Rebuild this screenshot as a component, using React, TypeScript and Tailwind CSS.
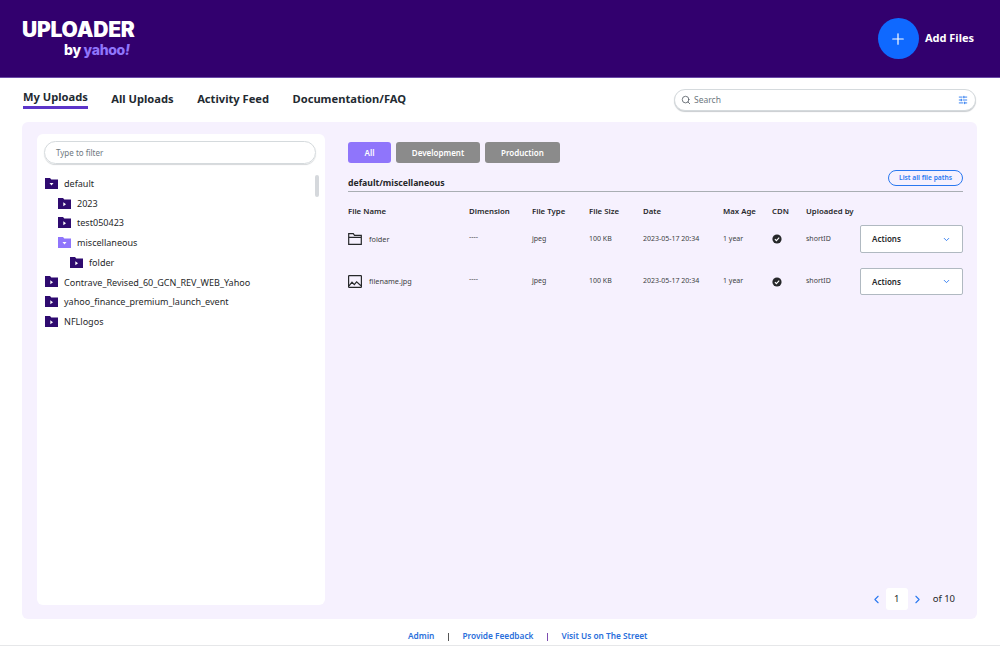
import { ChevronDown, ChevronLeft, ChevronRight, Plus, Search, SlidersHorizontal } from "lucide-react";

function TreeFolder({ light, open }: { light?: boolean; open?: boolean }) {
  return (
    <svg width="13" height="11" viewBox="0 0 13 11" className="-mt-[1px] shrink-0">
      <path d="M0 0h5l1.3 1.5H13V11H0z" fill={light ? "#8f75fb" : "#2f0b70"} />
      {open ? <path d="M4.5 5h4L6.5 7.5z" fill="#fff" /> : <path d="M5.3 4.2l2.7 2-2.7 2z" fill="#fff" />}
    </svg>
  );
}

function TreeRow({ label, indent, light, open }: { label: string; indent: string; light?: boolean; open?: boolean }) {
  return (
    <div className={`flex h-[19.7px] items-center gap-[6px] text-[9.05px] text-[#26282a] ${indent}`}>
      <TreeFolder light={light} open={open} />
      <span>{label}</span>
    </div>
  );
}

function FolderIcon() {
  return (
    <svg width="14" height="12" viewBox="0 0 14 12" fill="none" stroke="#26282a" strokeWidth="1.2">
      <path d="M.7.7h4.6l1.2 1.6h6.8v9H.7zM.7 4.4h12.6" />
    </svg>
  );
}

function ImageIcon() {
  return (
    <svg width="14" height="13" viewBox="0 0 14 13" fill="none" stroke="#26282a" strokeWidth="1.2">
      <rect x=".6" y=".6" width="12.8" height="11.8" rx=".6" />
      <path d="M1 10.8l3-3.6 2.3 2.4 2.3-2.8 4.4 4" />
    </svg>
  );
}

function CheckBadge() {
  return (
    <svg width="10" height="10" viewBox="0 0 10 10">
      <circle cx="5" cy="5" r="4.6" fill="#26282a" />
      <path d="M2.9 5.1l1.5 1.5 2.8-3" fill="none" stroke="#fff" strokeWidth="1.1" />
    </svg>
  );
}

function FileRow({ name, icon }: { name: string; icon: React.ReactNode }) {
  return (
    <div className="grid h-[42.4px] grid-cols-[121px_63px_57px_54px_80px_49px_34px_54px_103px] items-center text-[7px] text-[#3c3f43]">
      <div className="flex items-center gap-[7px] text-[7.3px]">
        {icon}
        <span>{name}</span>
      </div>
      <span className="-translate-y-[2px]">----</span>
      <span>jpeg</span>
      <span>100 KB</span>
      <span>2023-05-17 20:34</span>
      <span>1 year</span>
      <CheckBadge />
      <span>shortID</span>
      <div className="flex h-[27.5px] items-center justify-between rounded-[2px] border border-[#b0b9c1] bg-white px-[11px] text-[8px] font-semibold text-[#26282a]">
        Actions
        <ChevronDown size={9} strokeWidth={2.4} className="text-[#2a78f0]" />
      </div>
    </div>
  );
}

export default function App() {
  return (
    <div className="flex h-[646px] w-[1000px] flex-col overflow-hidden border-b border-[#e6e7e9] bg-white font-['Noto_Sans',sans-serif]">
      <header className="flex h-[78px] shrink-0 items-center justify-between border-b border-[#6a4aa8] bg-[#32006e] pl-[22px] pr-[26px]">
        <div className="-translate-y-[1px]">
          <div className="font-['Inter',sans-serif] text-[21px] font-black leading-[22px] tracking-[-0.2px] text-white">UPLOADER</div>
          <div className="mt-[1px] pl-[42px] font-['Inter',sans-serif] text-[14px] font-extrabold leading-[15px] tracking-[-0.3px] text-white">
            by <span className="text-[#8f75fb]">yahoo<em>!</em></span>
          </div>
        </div>
        <div className="flex items-center gap-[6px]">
          <div className="flex h-[41px] w-[41px] items-center justify-center rounded-full bg-[#0f69ff]">
            <Plus size={18} strokeWidth={1.6} className="text-white" />
          </div>
          <span className="text-[11px] font-bold text-white">Add Files</span>
        </div>
      </header>

      <nav className="flex h-[44px] shrink-0 items-center justify-between pl-[23px] pr-[24px]">
        <div className="flex -translate-y-[1px] items-center gap-[23.5px] text-[11.15px] font-bold text-[#232a31]">
          <span className="border-b-[3px] border-[#5c35c9] pb-[1px]">My Uploads</span>
          <span>All Uploads</span>
          <span>Activity Feed</span>
          <span>Documentation/FAQ</span>
        </div>
        <div className="flex h-[22px] w-[302px] items-center justify-between rounded-full border border-[#d5dadd] bg-white pl-[6px] pr-[7px] shadow-[0_1px_1px_#c9cdd0]">
          <div className="flex items-center gap-[3px] text-[8.5px] text-[#6e7780]">
            <Search size={10} strokeWidth={1.8} className="text-[#464e56]" />
            Search
          </div>
          <SlidersHorizontal size={10} strokeWidth={2.2} className="text-[#2a78f0]" />
        </div>
      </nav>

      <main className="mx-[22px] flex h-[497px] w-[955px] shrink-0 gap-[23px] rounded-[6px] bg-[#f6f1fe] pb-[14px] pl-[15px] pr-[14px] pt-[12px]">
        <aside className="relative h-full w-[288px] shrink-0 rounded-[6px] bg-white px-[7px] pt-[7px]">
          <div className="flex h-[23px] w-[272px] items-center rounded-full border border-[#d5dadd] pl-[11px] text-[8px] text-[#6e7780] shadow-[0_1px_1px_#d5d8da]">
            Type to filter
          </div>
          <div className="mt-[10px] flex flex-col pl-[1px]">
            <TreeRow label="default" indent="pl-0" open />
            <TreeRow label="2023" indent="pl-[13px]" />
            <TreeRow label="test050423" indent="pl-[13px]" />
            <TreeRow label="miscellaneous" indent="pl-[13px]" light open />
            <TreeRow label="folder" indent="pl-[25px]" />
            <TreeRow label="Contrave_Revised_60_GCN_REV_WEB_Yahoo" indent="pl-0" />
            <TreeRow label="yahoo_finance_premium_launch_event" indent="pl-0" />
            <TreeRow label="NFLlogos" indent="pl-0" />
          </div>
          <div className="absolute right-[6px] top-[41px] h-[22px] w-[4px] rounded-full bg-[#d5d8dc]" />
        </aside>

        <section className="-mb-[5px] flex min-w-0 flex-1 flex-col pt-[8px]">
          <div className="flex gap-[5px] text-[8px] font-semibold text-white">
            <div className="flex h-[21px] w-[43px] items-center justify-center rounded-[3px] bg-[#8f75fb]">All</div>
            <div className="flex h-[21px] w-[84px] items-center justify-center rounded-[3px] bg-[#8b8b8b]">Development</div>
            <div className="flex h-[21px] w-[75px] items-center justify-center rounded-[3px] bg-[#8b8b8b]">Production</div>
          </div>
          <div className="mt-[7px] flex h-[22px] items-end justify-between border-b border-[#a9aeb3] pb-[1px]">
            <span className="text-[8.7px] font-bold text-[#26282a]">default/miscellaneous</span>
            <div className="mb-[4px] flex h-[16px] w-[75px] items-center justify-center rounded-full border border-[#2a78f0] text-[6.7px] font-semibold text-[#2a78f0]">
              List all file paths
            </div>
          </div>
          <div className="mt-[13px] grid grid-cols-[121px_63px_57px_54px_80px_49px_34px_157px] text-[7.8px] font-semibold leading-[12px] text-[#26282a]">
            <span>File Name</span>
            <span>Dimension</span>
            <span>File Type</span>
            <span>File Size</span>
            <span>Date</span>
            <span>Max Age</span>
            <span>CDN</span>
            <span>Uploaded by</span>
          </div>
          <div className="mt-[1px] flex flex-col">
            <FileRow name="folder" icon={<FolderIcon />} />
            <FileRow name="filename.jpg" icon={<ImageIcon />} />
          </div>
          <div className="mt-auto flex items-center justify-end pr-[8px] text-[9.5px] text-[#26282a]">
            <ChevronLeft size={13} strokeWidth={2} className="text-[#2a78f0]" />
            <div className="mx-[3px] flex h-[22px] w-[22px] items-center justify-center rounded-[3px] bg-white">1</div>
            <ChevronRight size={13} strokeWidth={2} className="text-[#2a78f0]" />
            <span className="ml-[9px]">of 10</span>
          </div>
        </section>
      </main>

      <footer className="flex h-[26px] shrink-0 items-center pl-[408px] pt-[9px] text-[8.3px] font-semibold text-[#2a6fdb]">
        <span>Admin</span>
        <span className="mx-[13.5px] h-[8px] w-px bg-[#555]" />
        <span>Provide Feedback</span>
        <span className="mx-[13.5px] h-[8px] w-px bg-[#7d4cb0]" />
        <span>Visit Us on The Street</span>
      </footer>
    </div>
  );
}
